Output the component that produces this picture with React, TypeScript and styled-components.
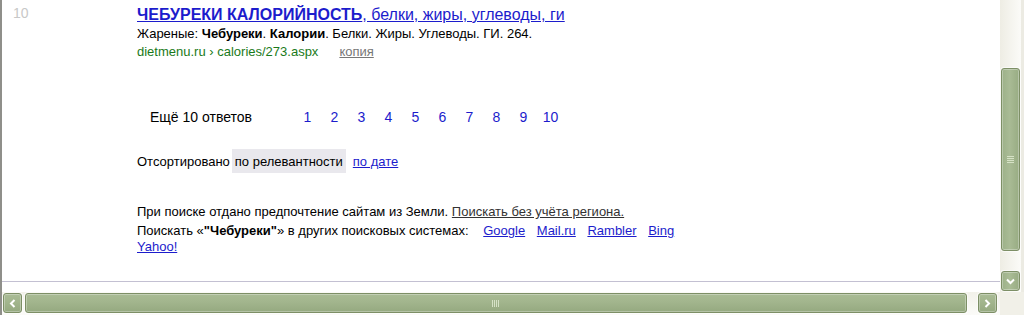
import React from "react";
import styled, { createGlobalStyle } from "styled-components";

const GlobalStyle = createGlobalStyle`
  html, body {
    margin: 0;
    padding: 0;
    overflow: hidden;
    background: #ffffff;
  }
  body {
    font-family: "Liberation Sans", Arial, sans-serif;
  }
`;

const pages = [1, 2, 3, 4, 5, 6, 7, 8, 9, 10];
const engines = ["Google", "Mail.ru", "Rambler", "Bing", "Yahoo!"];

export default function App() {
  return (
    <Window>
      <GlobalStyle />
      <TopRow>
        <Viewport>
          <Result>
            <Position>10</Position>
            <ResultBody>
              <TitleLink href="#">
                <b>ЧЕБУРЕКИ КАЛОРИЙНОСТЬ</b>, белки, жиры, углеводы, ги
              </TitleLink>
              <Snippet>
                Жареные: <b>Чебуреки</b>. <b>Калории</b>. Белки. Жиры. Углеводы. ГИ. 264.
              </Snippet>
              <UrlLine>
                <Url>dietmenu.ru › calories/273.aspx</Url>
                <CopyLink href="#">копия</CopyLink>
              </UrlLine>
            </ResultBody>
          </Result>

          <Content>
            <Pager>
              <PagerLabel>Ещё 10 ответов</PagerLabel>
              {pages.map((p) => (
                <PageLink key={p} href="#">{p}</PageLink>
              ))}
            </Pager>

            <SortRow>
              Отсортировано
              <SortCurrent>по релевантности</SortCurrent>
              <BlueLink href="#">по дате</BlueLink>
            </SortRow>

            <Footer>
              <Para>
                При поиске отдано предпочтение сайтам из Земли.{" "}
                <DarkLink href="#">Поискать без учёта региона.</DarkLink>
              </Para>
              <Para>
                Поискать «<b>"Чебуреки"</b>» в других поисковых системах:{" "}
                {engines.map((e) => (
                  <React.Fragment key={e}>
                    <EngineLink href="#">{e}</EngineLink>{" "}
                  </React.Fragment>
                ))}
              </Para>
            </Footer>
          </Content>
        </Viewport>

        <VScroll>
          <VThumb>
            <VGrip />
          </VThumb>
          <ArrowButton $down>
            <svg width="9" height="7" viewBox="0 0 9 7">
              <polyline points="1,1.5 4.5,5 8,1.5" fill="none" stroke="#ffffff" strokeWidth="2" />
            </svg>
          </ArrowButton>
        </VScroll>
        <Frame />
      </TopRow>

      <BottomRow>
        <HScroll>
          <ArrowButton>
            <svg width="7" height="9" viewBox="0 0 7 9">
              <polyline points="5.5,1 2,4.5 5.5,8" fill="none" stroke="#ffffff" strokeWidth="2" />
            </svg>
          </ArrowButton>
          <HThumb style={{ width: 942 }}>
            <HGrip />
          </HThumb>
          <ArrowButton>
            <svg width="7" height="9" viewBox="0 0 7 9">
              <polyline points="1.5,1 5,4.5 1.5,8" fill="none" stroke="#ffffff" strokeWidth="2" />
            </svg>
          </ArrowButton>
        </HScroll>
        <Corner />
      </BottomRow>
    </Window>
  );
}

const Window = styled.div`
  width: 1022px;
  height: 315px;
  border-left: 2px solid #8f8f8a;
  display: flex;
  flex-direction: column;
  background: #f4f3ee;
`;

const TopRow = styled.div`
  display: flex;
  height: 292px;
`;

const Viewport = styled.div`
  width: 998px;
  background: #ffffff;
  overflow: hidden;
  color: #000000;
  font-size: 13px;
`;

const Result = styled.div`
  display: grid;
  grid-template-columns: 135px 1fr;
  padding-top: 5px;
`;

const Position = styled.div`
  padding-left: 11px;
  font-size: 14px;
  line-height: 17px;
  color: #c8c8c8;
`;

const ResultBody = styled.div`
  display: flex;
  flex-direction: column;
`;

const TitleLink = styled.a`
  font-size: 16px;
  line-height: 20px;
  color: #1c1ccc;
  text-decoration: underline;
  align-self: flex-start;
`;

const Snippet = styled.div`
  line-height: 18px;
`;

const UrlLine = styled.div`
  line-height: 17px;
`;

const Url = styled.span`
  color: #1a7a1a;
`;

const CopyLink = styled.a`
  margin-left: 21px;
  color: #777777;
  text-decoration: underline;
`;

const Content = styled.div`
  padding: 0 0 26px 135px;
  border-bottom: 1px solid #c3c0d2;
`;

const Pager = styled.div`
  display: flex;
  align-items: baseline;
  margin-top: 47px;
  padding-left: 13px;
  font-size: 14px;
  line-height: 20px;
`;

const PagerLabel = styled.span`
  width: 144px;
`;

const PageLink = styled.a`
  width: 27px;
  text-align: center;
  color: #1c1ccc;
  text-decoration: none;
`;

const SortRow = styled.div`
  display: flex;
  align-items: baseline;
  margin-top: 22px;
  line-height: 16px;
`;

const SortCurrent = styled.span`
  margin-left: 2px;
  padding: 5px 3px 3px 3px;
  background: #e9e8ed;
`;

const BlueLink = styled.a`
  margin-left: 7px;
  color: #1c1ccc;
  text-decoration: underline;
`;

const Footer = styled.div`
  margin-top: 31px;
  width: 560px;
`;

const Para = styled.div`
  line-height: 16px;
  & + & {
    margin-top: 3px;
  }
`;

const DarkLink = styled.a`
  color: #333333;
  text-decoration: underline;
`;

const EngineLink = styled.a`
  margin-right: 8px;
  color: #1c1ccc;
  text-decoration: underline;
  &:first-of-type {
    margin-left: 11px;
  }
`;

const VScroll = styled.div`
  width: 21px;
  display: flex;
  flex-direction: column;
  align-items: center;
  padding-top: 68px;
  box-sizing: border-box;
  background: linear-gradient(to right, #eeede4, #fbfbf8);
`;

const thumbBase = `
  box-sizing: border-box;
  border: 1px solid #7d8f66;
  border-radius: 3px;
  box-shadow: inset 0 0 0 1px rgba(255, 255, 255, 0.3), 0 0 0 1px rgba(255, 255, 255, 0.6);
  display: flex;
  align-items: center;
  justify-content: center;
`;

const VThumb = styled.div`
  ${thumbBase}
  width: 19px;
  height: 183px;
  background: linear-gradient(to right, #9db189, #a9bb95 45%, #98ac83);
`;

const VGrip = styled.div`
  width: 7px;
  height: 8px;
  background: repeating-linear-gradient(to bottom, #d6e2c6 0 1px, transparent 1px 2px);
`;

const HThumb = styled.div`
  ${thumbBase}
  height: 20px;
  margin: 0 11px 0 3px;
  background: linear-gradient(to bottom, #a9bb95, #a2b58d 45%, #95a980);
`;

const HGrip = styled.div`
  width: 8px;
  height: 7px;
  background: repeating-linear-gradient(to right, #d6e2c6 0 1px, transparent 1px 2px);
`;

const ArrowButton = styled.div<{ $down?: boolean }>`
  ${thumbBase}
  width: 19px;
  height: 20px;
  margin-top: ${(p) => (p.$down ? "20px" : "0")};
  background: ${(p) =>
    p.$down
      ? "linear-gradient(to right, #9db189, #aabc96 45%, #98ac83)"
      : "linear-gradient(to bottom, #aabc96, #a2b58d 45%, #95a980)"};
`;

const Frame = styled.div`
  width: 3px;
  background: #ecebe3;
`;

const BottomRow = styled.div`
  display: flex;
  height: 23px;
`;

const HScroll = styled.div`
  width: 998px;
  display: flex;
  align-items: flex-start;
  padding: 1px 0 0 1px;
  box-sizing: border-box;
  background: linear-gradient(to bottom, #f2f1ea, #fbfbf8);
`;

const Corner = styled.div`
  width: 24px;
  background: #f1f0e8;
`;
